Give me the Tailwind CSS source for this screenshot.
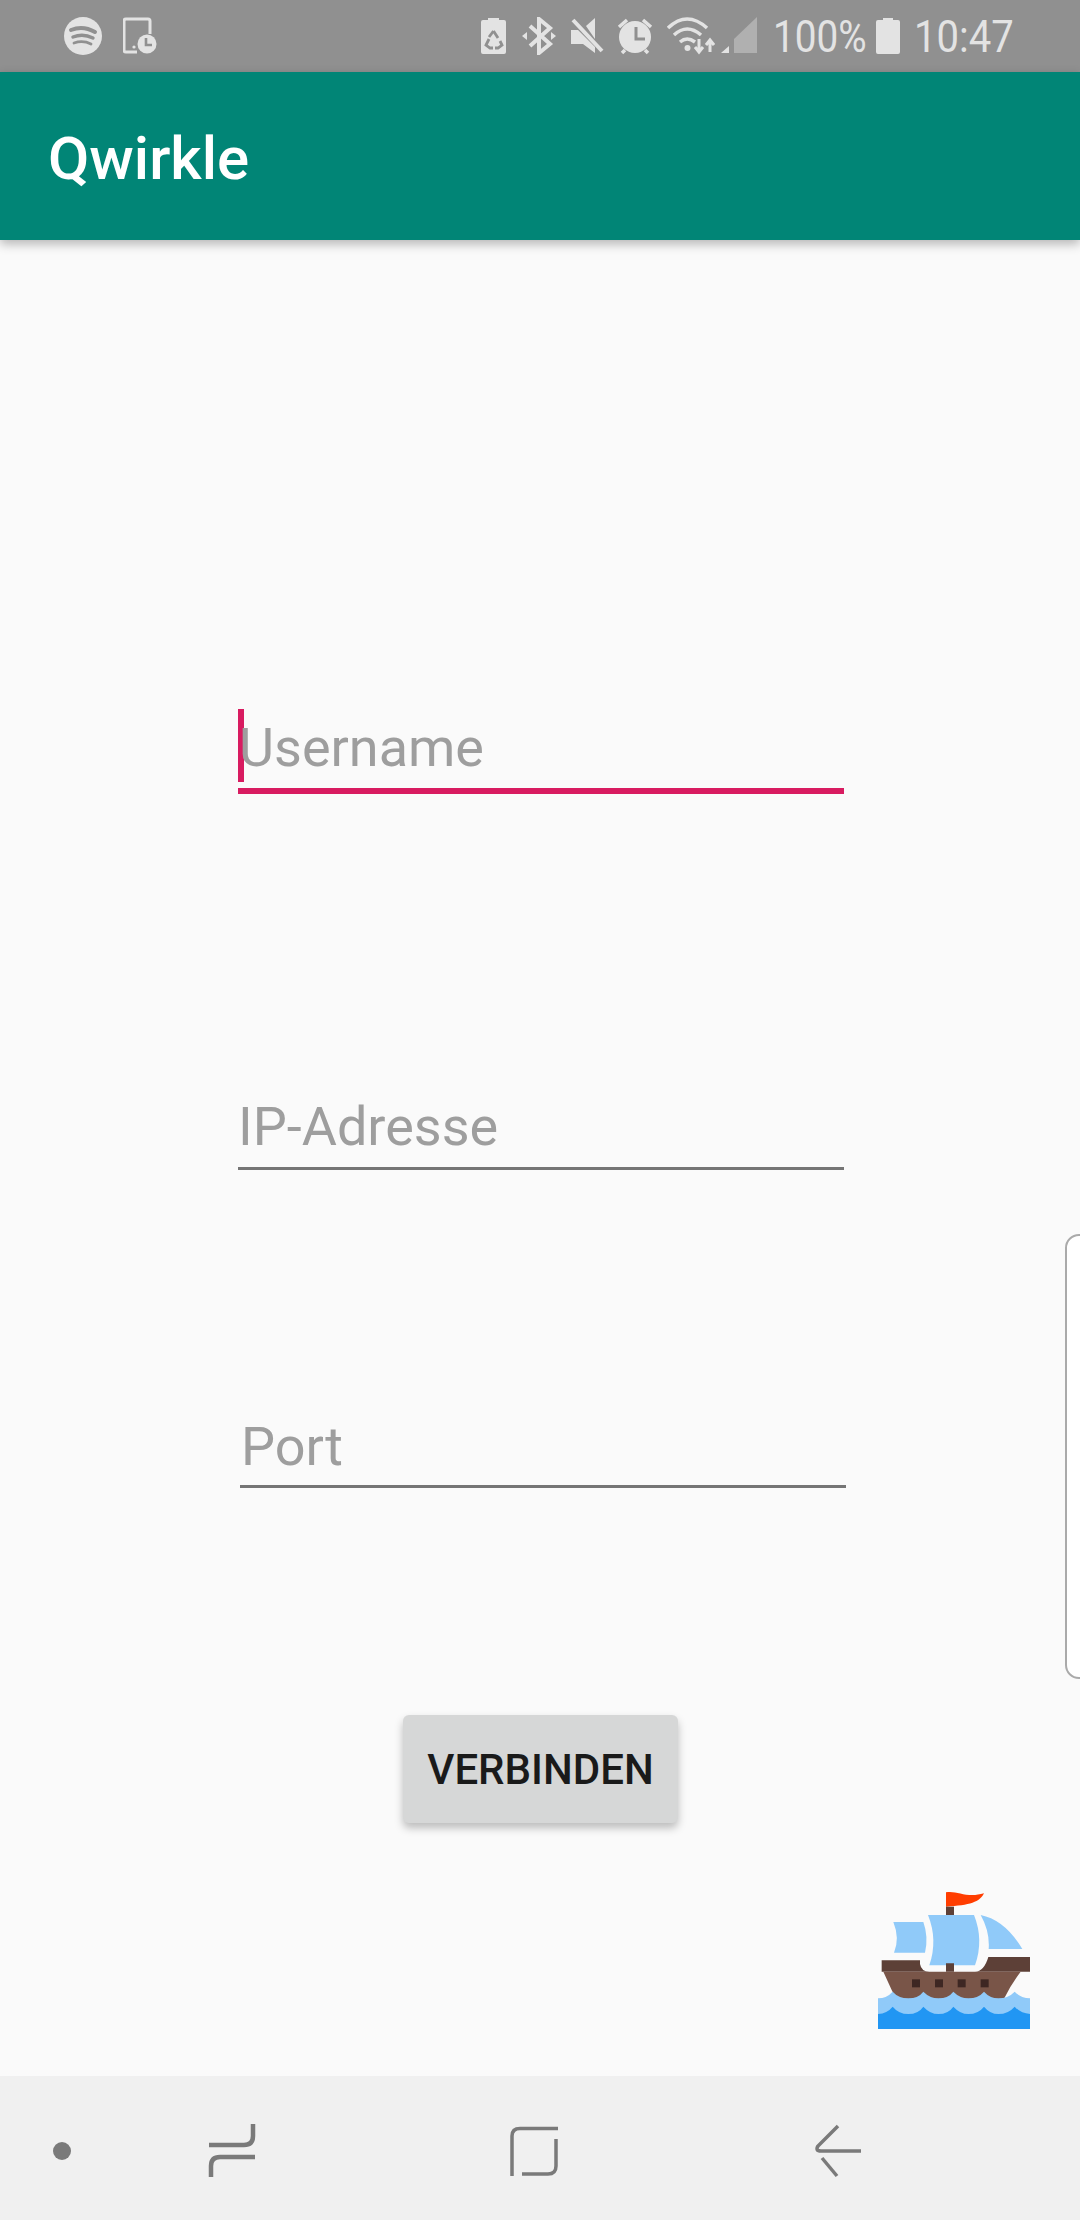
<!DOCTYPE html>
<html lang="de">

<head>
  <meta charset="UTF-8">
  <meta name="viewport" content="width=device-width, initial-scale=1.0">
  <title>Qwirkle</title>
  <script src="https://cdn.jsdelivr.net/npm/@tailwindcss/browser@4"></script>
</head>

<body class="bg-[#fafafa] font-['Roboto',sans-serif]">
  <div class="relative flex flex-col w-[1080px] h-[2220px] overflow-hidden">

    <!-- Status bar -->
    <div class="flex items-center h-[72px] bg-[#909090] text-[#e3e3e3] shrink-0">
      <svg class="ml-[64px]" width="38" height="38" viewBox="64 16 38 38">
        <circle cx="83" cy="35" r="19" fill="#e3e3e3" />
        <path d="M71 29 Q83 24 95 31" fill="none" stroke="#909090" stroke-width="4" stroke-linecap="round" />
        <path d="M73 36 Q83 32 93 37" fill="none" stroke="#909090" stroke-width="3.4" stroke-linecap="round" />
        <path d="M74 42 Q83 39 91 43" fill="none" stroke="#909090" stroke-width="2.8" stroke-linecap="round" />
      </svg>
      <svg class="ml-[21px]" width="34" height="38" viewBox="123 16 34 38">
        <path d="M137 51 H126 Q124 51 124 49 V20 Q124 18 126 18 H148 Q150 18 150 20 V33" fill="none" stroke="#e3e3e3" stroke-width="3" />
        <circle cx="134" cy="46" r="1.6" fill="#e3e3e3" />
        <circle cx="147" cy="43" r="9.5" fill="#e3e3e3" />
        <path d="M146 37 V44 H152" fill="none" stroke="#909090" stroke-width="2.6" />
      </svg>

      <svg class="ml-[324px]" width="25" height="38" viewBox="481 16 25 38">
        <path d="M488 19 V17 H499 V19 H504 Q506 19 506 21 V51 Q506 53 504 53 H483 Q481 53 481 51 V21 Q481 19 483 19Z" fill="#e3e3e3" />
        <path d="M493.500 30 L498 37 M489 38 L486 44 L490 47 H493 M500 40 L502 44 L498 47 H495 M489 36 L493.500 30" fill="none" stroke="#909090" stroke-width="2.800" />
      </svg>
      <svg class="ml-[16px]" width="34" height="38" viewBox="522 16 34 38">
        <path d="M530 25 L550 43 L539 52 V18 L550 27 L530 45" fill="none" stroke="#e3e3e3" stroke-width="4" />
        <path d="M522 35 L527 31 V39Z M556 35 L551 31 V39Z" fill="#e3e3e3" />
      </svg>
      <svg class="ml-[14px]" width="34" height="38" viewBox="570 16 34 38">
        <path d="M586 25 L595 17 V38Z M571 29 H578 L595 46 V52 L583 43 H571Z" fill="#e3e3e3" />
        <path d="M573 19 L602 50" stroke="#e3e3e3" stroke-width="4" />
      </svg>
      <svg class="ml-[13px]" width="36" height="38" viewBox="617 16 36 38">
        <circle cx="635" cy="36" r="16" fill="#e3e3e3" />
        <path d="M619 26 L627 19 M651 26 L643 19 M622 52 L625 49 M648 52 L645 49" stroke="#e3e3e3" stroke-width="3.500" />
        <path d="M636 26 V38 H645" fill="none" stroke="#909090" stroke-width="3" />
      </svg>
      <svg class="ml-[14px]" width="48" height="38" viewBox="667 16 48 38">
        <path d="M668 27 Q687 9 707 27 M674 34 Q687 22 701 34 M680 41 Q687 35 695 41" fill="none" stroke="#e3e3e3" stroke-width="3.500" />
        <circle cx="687.500" cy="47" r="3" fill="#e3e3e3" />
        <path d="M699 38 V51 M695 46 L699 51 L703 46 M710 51 V39 M706 44 L710 39 L714 44" fill="none" stroke="#e3e3e3" stroke-width="3" />
      </svg>
      <svg class="ml-[6px]" width="36" height="38" viewBox="721 16 36 38">
        <path d="M721 52 L729 45 V52Z" fill="#e3e3e3" />
        <path d="M734 52 V38 L757 16 V52Z" fill="#b0b0b0" />
      </svg>
      <span class="ml-[16px] w-[90px] text-[45px] leading-none origin-left scale-x-[.86]">100%</span>
      <svg class="ml-[13px]" width="24" height="38" viewBox="877 16 24 38">
        <path d="M884 19 V17 H894 V19 H899 Q901 19 901 21 V51 Q901 53 899 53 H879 Q877 53 877 51 V21 Q877 19 879 19Z" fill="#e3e3e3" />
      </svg>
      <span class="ml-[14px] text-[45px] leading-none origin-left scale-x-[.89]">10:47</span>
    </div>

    <!-- App bar -->
    <div class="flex items-center h-[168px] pl-[48px] pt-[5px] bg-[#018576] shadow-[0_4px_10px_rgba(0,0,0,0.28)] shrink-0 z-10">
      <h1 class="text-[60px] leading-none font-medium text-white">Qwirkle</h1>
    </div>

    <!-- Form -->
    <div class="flex flex-col flex-1">
      <div class="relative flex items-end h-[85px] w-[606px] mt-[469px] ml-[238px] border-b-[6px] border-[#d81b60]">
        <div class="absolute left-0 top-0 w-[6px] h-[73px] bg-[#d81b60]"></div>
        <span class="relative pl-[1px] pb-[5px] text-[54px] leading-[70px] text-[#9e9e9e]">Username</span>
      </div>
      <div class="flex items-end h-[86px] w-[606px] mt-[290px] ml-[238px] border-b-[3px] border-[#757575]">
        <span class="pb-[5px] text-[54px] leading-[70px] text-[#9e9e9e]">IP-Adresse</span>
      </div>
      <div class="flex items-end h-[85px] w-[606px] mt-[233px] ml-[240px] border-b-[3px] border-[#757575]">
        <span class="pl-[1px] pb-[3px] text-[54px] leading-[70px] text-[#9e9e9e]">Port</span>
      </div>

      <button class="w-[275px] h-[108px] mt-[227px] ml-[403px] rounded-[6px] bg-[#d6d7d7] text-[42px] font-medium text-[#1a1a1a] shadow-[0_5px_8px_rgba(0,0,0,0.25)]">VERBINDEN</button>

      <!-- Ship -->
      <svg class="mt-[37px] ml-[850px]" width="200" height="190" viewBox="0 0 600 570">
        <path d="M288 97 C320 90 350 116 402 100 C390 126 360 136 288 140Z" fill="#ff3d00" />
        <rect x="288" y="140" width="24" height="30" fill="#5d4037" />
        <path d="M130 186 H220 Q236 230 225 278 H132 Q150 235 130 186Z" fill="#90caf9" />
        <path d="M234 165 H372 Q402 240 375 316 H238 Q264 240 234 165Z" fill="#90caf9" />
        <path d="M392 165 Q465 180 517 267 H416 Q420 215 392 165Z" fill="#90caf9" />
        <path d="M95 301 H210 V312 Q214 335 238 335 H288 V310 H312 V335 H375 Q402 335 415 291 H540 V335 H95Z" fill="#5d4037" />
        <path d="M100 335 H512 Q482 375 460 420 H175 Q135 420 125 390Z" fill="#795548" />
        <g fill="#3e2723">
          <rect x="186" y="358" width="24" height="24" />
          <rect x="255" y="358" width="24" height="24" />
          <rect x="323" y="358" width="24" height="24" />
          <rect x="392" y="358" width="24" height="24" />
        </g>
        <path d="M84 415 Q110 415 128 395 Q146 415 175 415 Q205 415 220 395 Q240 415 265 415 Q295 415 310 395 Q330 415 355 415 Q385 415 402 395 Q420 415 445 415 Q475 415 494 395 Q512 415 540 415 V507 H84Z" fill="#90caf9" />
        <path d="M84 462 Q112 460 128 440 Q146 462 175 462 Q205 462 220 440 Q240 462 265 462 Q295 462 310 440 Q330 462 355 462 Q385 462 402 440 Q420 462 445 462 Q475 462 494 440 Q512 460 540 462 V507 H84Z" fill="#2196f3" />
      </svg>
    </div>

    <!-- Navigation bar -->
    <div class="relative h-[144px] bg-[#f0f0f0] shrink-0">
      <svg width="1080" height="144" viewBox="0 2076 1080 144">
        <circle cx="62" cy="2151" r="9" fill="#7a7a7a" />
        <g fill="none" stroke="#7a7a7a" stroke-width="4">
          <path d="M253 2124 V2136 Q253 2145 244 2145 H209" stroke-width="4.500" />
          <path d="M255 2157 H220 Q211 2157 211 2166 V2177" stroke-width="4.500" />
          <path d="M558 2128.500 H520 Q512 2128.500 512 2136 V2176" stroke-width="3.500" />
          <path d="M556 2139 V2166 Q556 2174 548 2174 H522" stroke-width="3.500" />
          <path d="M838 2126 L818 2146 Q815 2151 821 2151 H861" stroke-width="3.500" />
          <path d="M822 2158 L837 2176" stroke-width="3.500" />
        </g>
      </svg>
    </div>

    <!-- Edge panel handle -->
    <div class="absolute left-[1065px] top-[1234px] w-[40px] h-[445px] rounded-[14px] border-2 border-[#aaaaaa] bg-white"></div>
  </div>
</body>

</html>
